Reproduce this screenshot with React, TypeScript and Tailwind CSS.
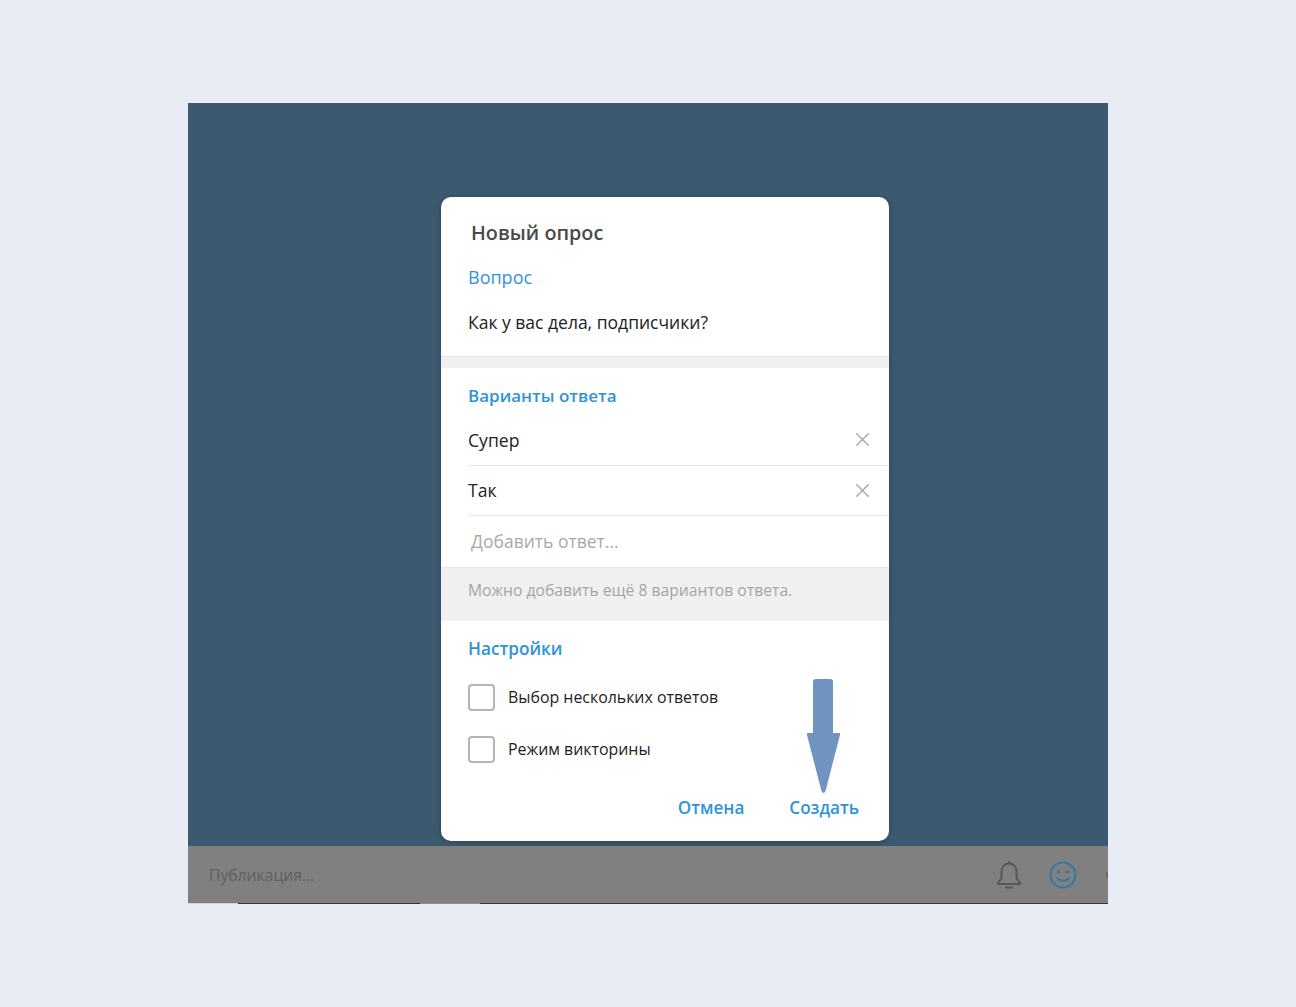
import { X } from "lucide-react";

const font = { fontFamily: '"Open Sans", sans-serif' };

function AnswerRow({ text }: { text: string }) {
  return (
    <div className="flex h-[50.5px] items-center justify-between border-b border-[#e6e6e6] pr-[15.5px]">
      <span className="text-[17.6px] text-[#222222]">{text}</span>
      <X className="h-[23px] w-[23px] text-[#a8a8a8]" strokeWidth={1.4} />
    </div>
  );
}

function CheckRow({ text }: { text: string }) {
  return (
    <div className="flex h-[52px] items-center gap-[13px]">
      <div className="h-[27px] w-[27px] rounded-[4px] border-2 border-[#b5b5b5]" />
      <span className="mt-[2px] text-[15.9px] text-[#222222]">{text}</span>
    </div>
  );
}

export default function App() {
  return (
    <div className="min-h-[1007px] bg-[#e9ecf5] pt-[103px] pl-[188px]" style={font}>
      <div className="w-[920px]">
        <div className="h-[743px] bg-[#3c5a6f] pt-[94px] pl-[253px]">
          <div className="relative h-[644px] w-[448px] overflow-hidden rounded-[10px] bg-white shadow-[0_1px_6px_rgba(0,0,0,0.25)]">
            {/* question */}
            <div className="h-[159px] pl-[27px]">
              <div className="pt-[21px] pl-[3px] text-[19.8px] leading-[30px] font-semibold text-[#4a4a4a]">Новый опрос</div>
              <div className="pt-[18px] text-[18px] leading-[22px] font-medium text-[#2f93d8]">Вопрос</div>
              <div className="pt-[22px] text-[17.5px] leading-[24px] text-[#222222]">Как у вас дела, подписчики?</div>
            </div>
            <div className="h-[12px] border-t border-[#e8e8e8] bg-[#f0f0f0]" />

            {/* answers */}
            <div className="pl-[27px]">
              <div className="pt-[17px] text-[17px] leading-[22px] font-semibold text-[#2f93d8]">Варианты ответа</div>
              <div className="mt-[8px]">
                <AnswerRow text="Супер" />
                <AnswerRow text="Так" />
              </div>
              <div className="flex h-[51px] items-center pl-[3px] text-[17.5px] text-[#a9a9a9]">Добавить ответ...</div>
            </div>
            <div className="flex h-[54px] items-center border-t border-[#e8e8e8] bg-[#f0f0f0] pb-[8px] pl-[27px] text-[15.7px] text-[#a5a5a5]">
              Можно добавить ещё 8 вариантов ответа.
            </div>

            {/* settings */}
            <div className="pl-[27px]">
              <div className="pt-[17px] text-[17.2px] leading-[22px] font-semibold text-[#2f93d8]">Настройки</div>
              <div className="mt-[11px]">
                <CheckRow text="Выбор нескольких ответов" />
                <CheckRow text="Режим викторины" />
              </div>
            </div>
            <div className="flex justify-end gap-[45px] pt-[21px] pr-[30px] text-[17.1px] leading-[24px] font-semibold text-[#2f93d8]">
              <span>Отмена</span>
              <span>Создать</span>
            </div>

            <svg className="absolute top-[481px] left-[365px]" width="36" height="117" viewBox="0 0 36 117">
              <path
                d="M7 3.500Q7 1 10 1H24Q27 1 27 3.500V55H33Q34.500 55 34 57L19.500 113Q17.500 117 15.500 113L1 57Q0.500 55 2 55H7Z"
                fill="#7093c0"
              />
            </svg>
          </div>
        </div>

        {/* composer under the overlay */}
        <div className="relative flex h-[57px] items-center justify-between bg-[#808080] pr-[31px] pl-[21px]">
          <span className="mt-[2px] text-[15.7px] text-[#5f5f5f]">Публикация...</span>
          <div className="flex items-center gap-[26px]">
            <svg width="28" height="30" viewBox="0 0 28 30" fill="none" stroke="#565656" strokeWidth="2" strokeLinejoin="round">
              <path d="M14 3.500C9 3.500 6.500 7.500 6.500 12V18L3 23V24H25V23L21.500 18V12C21.500 7.500 19 3.500 14 3.500Z" />
              <path d="M14 1V3.500" />
              <path d="M11 27.500H17" strokeLinecap="round" />
            </svg>
            <svg width="28" height="28" viewBox="0 0 28 28" fill="none" stroke="#2f7aa8" strokeWidth="2">
              <circle cx="14" cy="14" r="12.500" />
              <circle cx="9.500" cy="11" r="1.800" fill="#2f7aa8" stroke="none" />
              <circle cx="18.500" cy="11" r="1.800" fill="#2f7aa8" stroke="none" />
              <path d="M8.500 17C10 20.500 18 20.500 19.500 17" strokeLinecap="round" />
            </svg>
          </div>
          {/* next icon, cut off by the crop */}
          <div className="absolute top-[26px] right-0 h-[6px] w-[2px] rounded-l-full bg-[#666666]" />
        </div>
        {/* cropped edge of the screenshot */}
        <div className="flex h-px">
          <div className="w-[50px] bg-[#cfd2da]" />
          <div className="w-[182px] bg-[#33383c]" />
          <div className="w-[60px] bg-[#8a8c90]" />
          <div className="flex-1 bg-[#33383c]" />
        </div>
      </div>
    </div>
  );
}
